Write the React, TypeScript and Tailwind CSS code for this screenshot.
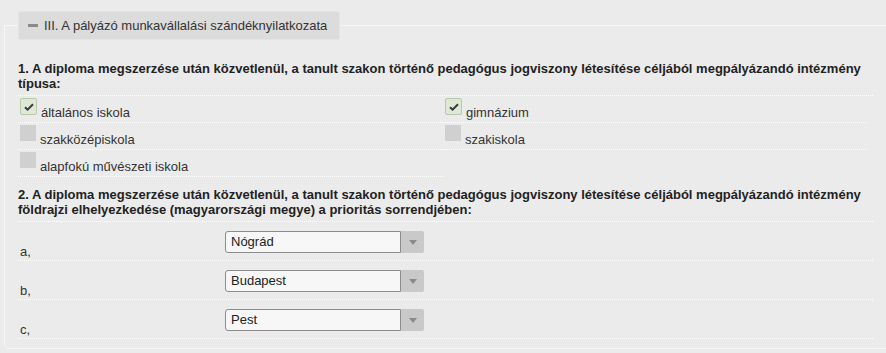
import React from 'react';

type Option = { label: string; checked: boolean };

const leftOptions: Option[] = [
  { label: 'általános iskola', checked: true },
  { label: 'szakközépiskola', checked: false },
  { label: 'alapfokú művészeti iskola', checked: false },
];

const rightOptions: Option[] = [
  { label: 'gimnázium', checked: true },
  { label: 'szakiskola', checked: false },
];

const priorities = [
  { key: 'a,', value: 'Nógrád' },
  { key: 'b,', value: 'Budapest' },
  { key: 'c,', value: 'Pest' },
];

const CheckBox = ({ checked }: { checked: boolean }) =>
  checked ? (
    <span className="flex h-[17px] w-[17px] shrink-0 items-center justify-center rounded-[2px] border border-[#b9c9ab] bg-[#dfe7d6]">
      <svg width="10" height="8" viewBox="0 0 10 8">
        <path d="M1 4.2 L3.6 6.6 L9 1.2" fill="none" stroke="#3a3a3a" strokeWidth="2" />
      </svg>
    </span>
  ) : (
    <span className="block h-[16px] w-[16px] shrink-0 bg-[#d0d0d0]" />
  );

const OptionRow = ({ option }: { option: Option }) => (
  <div className="flex h-[27px] items-start gap-[4px] border-b border-dotted border-white pl-[2px] pt-[2px]">
    <CheckBox checked={option.checked} />
    <span className="pt-[7px] text-[13px] leading-[15px] text-[#333]">{option.label}</span>
  </div>
);

const Select = ({ value }: { value: string }) => (
  <div className="flex h-[22px] w-[199px]">
    <div className="flex flex-1 items-center rounded-l-[3px] border border-[#8c8c8c] bg-[#f7f7f7] pl-[5px] text-[13px] text-[#222]">
      {value}
    </div>
    <div className="flex w-[23px] items-center justify-center rounded-r-[2px] bg-[#c9c9c9]">
      <svg width="8" height="5" viewBox="0 0 8 5">
        <path d="M0 0 H8 L4 5 Z" fill="#8a8a8a" />
      </svg>
    </div>
  </div>
);

export default function App() {
  return (
    <div
      className="h-[353px] w-[886px] overflow-hidden bg-[#ebebeb] pl-[4px] pt-[11px]"
      style={{ fontFamily: '"Liberation Sans", Arial, sans-serif' }}
    >
      <fieldset className="-mr-[20px] h-[338px] rounded-bl-[5px] border border-[#f6f6f6] pl-[13px]">
        <legend className="-ml-[0px] flex h-[29px] items-center gap-[6px] rounded-[3px] border border-[#e4e4e4] bg-[#dcdcdc] pl-[9px] pr-[12px] text-[13px] text-[#333]">
          <span className="block h-[3px] w-[10px] bg-[#8a8a8a]" />
          <span>III. A pályázó munkavállalási szándéknyilatkozata</span>
        </legend>

        <div className="w-[855px]">
          <div className="mt-[21px] border-b border-dotted border-white pb-[4px] text-[13px] font-bold leading-[15px] text-[#222]">
            1. A diploma megszerzése után közvetlenül, a tanult szakon történő pedagógus jogviszony létesítése céljából megpályázandó intézmény típusa:
          </div>
          <div className="flex">
            <div className="w-[425px]">
              {leftOptions.map((o) => (
                <OptionRow key={o.label} option={o} />
              ))}
            </div>
            <div className="w-[423px]">
              {rightOptions.map((o) => (
                <OptionRow key={o.label} option={o} />
              ))}
            </div>
          </div>

          <div className="mt-[10px] border-b border-dotted border-white pb-[4px] text-[13px] font-bold leading-[15px] text-[#222]">
            2. A diploma megszerzése után közvetlenül, a tanult szakon történő pedagógus jogviszony létesítése céljából megpályázandó intézmény földrajzi elhelyezkedése (magyarországi megye) a prioritás sorrendjében:
          </div>
          {priorities.map((p) => (
            <div key={p.key} className="flex h-[39px] border-b border-dotted border-white pt-[9px]">
              <span className="w-[207px] pl-[2px] pt-[13px] text-[13px] leading-[15px] text-[#333]">{p.key}</span>
              <Select value={p.value} />
            </div>
          ))}
        </div>
      </fieldset>
    </div>
  );
}
